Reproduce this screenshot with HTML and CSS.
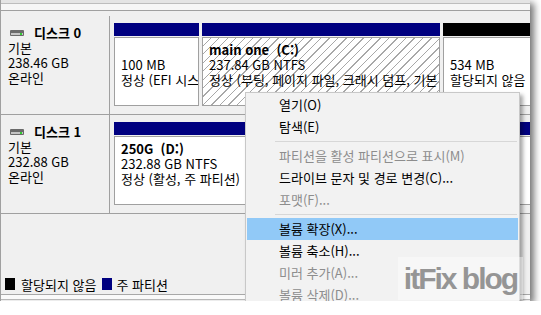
FILE: index.html
```html
<!DOCTYPE html>
<html lang="ko">
<head>
  <meta charset="UTF-8" />
  <title>디스크 관리</title>
  <link rel="stylesheet" href="styles.css">
</head>
<body>

  <div class="shot">
    <div class="topbar"></div>

    <div class="disk">
      <div class="disk-label">
        <div class="disk-name">
          <svg class="drive" width="14" height="6" viewBox="0 0 14 6">
            <rect x="0" y="0" width="14" height="6" rx="1" fill="#6a6a6a" />
            <rect x="1" y="3" width="12" height="2" fill="#c4c4c4" />
            <rect x="10" y="3" width="2" height="2" fill="#33cc33" />
          </svg>
          <b>디스크 0</b>
        </div>
        <div>기본</div>
        <div>238.46 GB</div>
        <div>온라인</div>
      </div>
      <div class="parts">
        <div class="part part-efi">
          <div class="part-head"></div>
          <div class="part-body">
            <div class="vol">&nbsp;</div>
            <div>100 MB</div>
            <div>정상 (EFI 시스템 파티션)</div>
          </div>
        </div>
        <div class="part part-c">
          <div class="part-head"></div>
          <div class="part-body hatched">
            <div class="vol">main one&nbsp; (C:)</div>
            <div>237.84 GB NTFS</div>
            <div>정상 (부팅, 페이지 파일, 크래시 덤프, 기본 데이터 파티션)</div>
          </div>
        </div>
        <div class="part part-free">
          <div class="part-head free"></div>
          <div class="part-body">
            <div class="vol">&nbsp;</div>
            <div>534 MB</div>
            <div>할당되지 않음</div>
          </div>
        </div>
      </div>
    </div>

    <div class="disk">
      <div class="disk-label">
        <div class="disk-name">
          <svg class="drive" width="14" height="6" viewBox="0 0 14 6">
            <rect x="0" y="0" width="14" height="6" rx="1" fill="#6a6a6a" />
            <rect x="1" y="3" width="12" height="2" fill="#c4c4c4" />
            <rect x="10" y="3" width="2" height="2" fill="#33cc33" />
          </svg>
          <b>디스크 1</b>
        </div>
        <div>기본</div>
        <div>232.88 GB</div>
        <div>온라인</div>
      </div>
      <div class="parts">
        <div class="part part-d">
          <div class="part-head"></div>
          <div class="part-body">
            <div class="vol">250G&nbsp; (D:)</div>
            <div>232.88 GB NTFS</div>
            <div>정상 (활성, 주 파티션)</div>
          </div>
        </div>
      </div>
    </div>

    <div class="spacer"></div>

    <div class="legend">
      <span class="swatch black"></span>
      <span>할당되지 않음</span>
      <span class="swatch navy"></span>
      <span>주 파티션</span>
    </div>
    <div class="foot"></div>

    <ul class="menu">
      <li>열기(O)</li>
      <li>탐색(E)</li>
      <li class="sep"></li>
      <li class="off">파티션을 활성 파티션으로 표시(M)</li>
      <li>드라이브 문자 및 경로 변경(C)...</li>
      <li class="off">포맷(F)...</li>
      <li class="sep"></li>
      <li class="hover">볼륨 확장(X)...</li>
      <li>볼륨 축소(H)...</li>
      <li class="off">미러 추가(A)...</li>
      <li class="off">볼륨 삭제(D)...</li>
    </ul>

    <div class="watermark">itFix blog</div>
  </div>

</body>
</html>
```

FILE: styles.css
```css
/* 디스크 관리 화면 캡처 */
body {
  margin: 0;
  background: #fff;
  font-family: "Noto Sans CJK KR", "Noto Sans", sans-serif;
  font-size: 13px;
  color: #000;
}

.shot {
  position: relative;
  display: flex;
  flex-direction: column;
  width: 530px;
  height: 301px;
  overflow: hidden;
  background: #f0f0f0;
  border-left: 1px solid #a0a0a0;
  box-sizing: border-box;
  box-shadow: 4px 3px 7px rgba(0, 0, 0, 0.55);
}

.topbar {
  height: 16px;
  flex-shrink: 0;
  background: linear-gradient(#e4e4e4 0 3px, #bdbdbd 3px 4px, #f6f6f6 4px 10px, #a0a0a0 10px 11px, #f0f0f0 11px);
}

.disk {
  display: flex;
  height: 98px;
  flex-shrink: 0;
  border-bottom: 1px solid #a0a0a0;
}

.disk-label {
  width: 109px;
  flex-shrink: 0;
  padding: 9px 0 0 7px;
  border-right: 1px solid #a0a0a0;
  line-height: 15px;
  box-sizing: border-box;
}

.disk-name {
  display: flex;
  align-items: center;
  gap: 10px;
}

.drive {
  margin-left: 2px;
}

.parts {
  display: flex;
  gap: 3px;
  padding: 7px 0 0 4px;
  flex: 1;
  min-width: 0;
  overflow: hidden;
}

.part {
  display: flex;
  flex-direction: column;
  flex-shrink: 0;
}

.part-efi { width: 85px; }
.part-c { width: 238px; }
.part-free { width: 100px; }
.part-d { width: 420px; }

.part-head {
  height: 13px;
  background: #000080;
}

.part-head.free {
  background: #000;
}

.part-body {
  margin-top: 1px;
  height: 69px;
  padding: 4px 6px 0;
  border: 1px solid #a0a0a0;
  background: #fff;
  line-height: 15px;
  white-space: nowrap;
  overflow: hidden;
  box-sizing: border-box;
}

.part-c .part-body {
  padding-right: 3px;
}

.part-body .vol {
  font-weight: bold;
}

.hatched {
  background: repeating-linear-gradient(135deg, #fff 0 5px, #a8a8a8 5px 6px);
}

.spacer {
  flex: 1;
}

.legend {
  display: flex;
  align-items: center;
  height: 20px;
  padding-left: 4px;
  flex-shrink: 0;
}

.swatch {
  width: 10px;
  height: 12px;
  margin-right: 6px;
}

.swatch.black {
  background: #000;
}

.swatch.navy {
  background: #000080;
  margin-left: 6px;
  margin-right: 4px;
}

.foot {
  height: 7px;
  flex-shrink: 0;
  border-top: 1px solid #a8a8a8;
  background: linear-gradient(#fafafa 0 4px, #b8b8b8 4px 5px, #ececec 5px);
  box-sizing: border-box;
}

/* 오른쪽 클릭 메뉴 */
.menu {
  position: absolute;
  left: 244px;
  top: 92px;
  width: 275px;
  margin: 0;
  padding: 1px;
  list-style: none;
  background: #f2f2f2;
  border: 1px solid #c8c8c8;
  box-shadow: 3px 3px 4px rgba(0, 0, 0, 0.35);
  box-sizing: border-box;
}

.menu li {
  height: 22px;
  line-height: 22px;
  padding-left: 32px;
  white-space: nowrap;
}

.menu li.off {
  color: #8d8d8d;
}

.menu li.hover {
  background: #91c9f7;
}

.menu li.sep {
  height: 7px;
  padding: 0;
  position: relative;
}

.menu li.sep::after {
  content: "";
  position: absolute;
  left: 28px;
  right: 1px;
  top: 3px;
  border-top: 1px solid #d7d7d7;
}

.watermark {
  position: absolute;
  left: 397px;
  top: 257px;
  width: 125px;
  height: 43px;
  background: rgba(255, 255, 255, 0.4);
  color: #959595;
  font-family: "Liberation Sans", sans-serif;
  font-weight: bold;
  font-size: 30px;
  letter-spacing: -2px;
  line-height: 43px;
  text-align: center;
}
```
